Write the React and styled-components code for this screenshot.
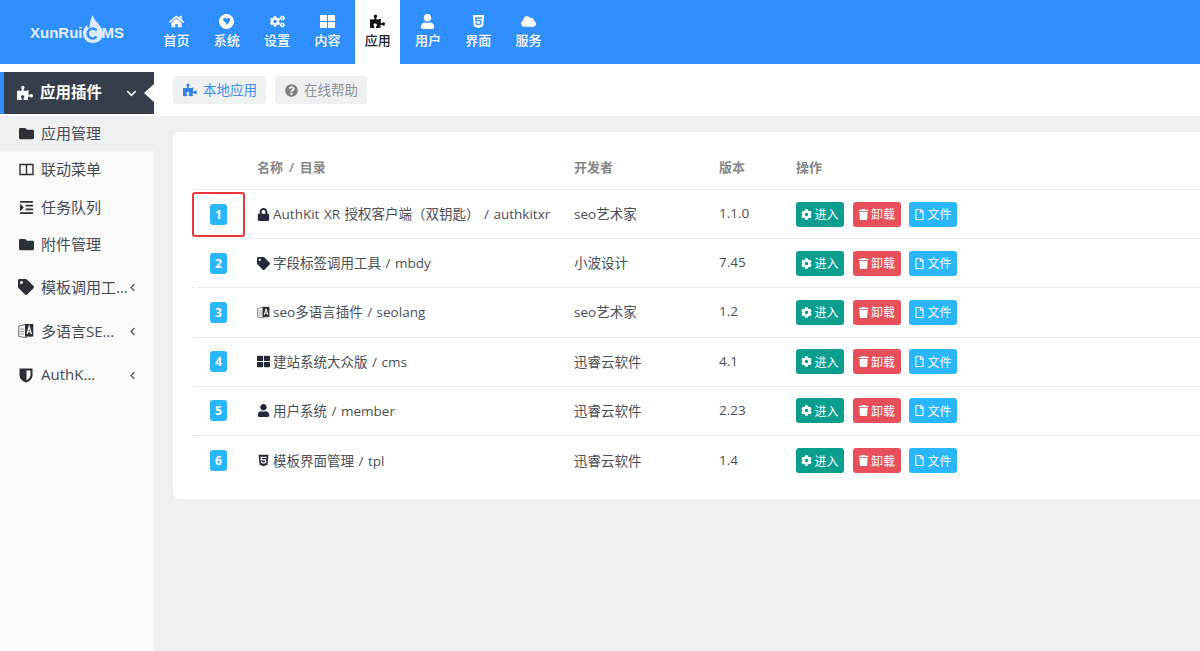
import styled, { createGlobalStyle } from 'styled-components';
import {
  FaHome, FaCogs, FaThLarge, FaPuzzlePiece, FaUser, FaHtml5, FaCloud,
  FaFolder, FaIndent, FaTag, FaLock, FaTrash,
  FaRegFile, FaCog, FaQuestionCircle, FaChevronDown, FaChevronLeft,
} from 'react-icons/fa';

const FONT = '"Open Sans", "Noto Sans CJK SC", sans-serif';

const GlobeIcon = () => (
  <svg viewBox="0 0 16 16">
    <circle cx="8" cy="8" r="8" fill="#ffffff" />
    <path d="M4.500 5c1.500-1.500 3-1 3.500 0 1-1 3.500-1 4 1 .3 2-2 3-3 5-.5 1-1.500 0-1.500-1C7.500 8.500 3.500 8 4.500 5z" fill="#2f8ffc" />
  </svg>
);

const ColumnsIcon = () => (
  <svg viewBox="0 0 15 15">
    <path d="M1 2.500h13v10H1zM7.500 2.500v10" fill="none" stroke="currentColor" strokeWidth="1.400" />
  </svg>
);

const BookIcon = () => (
  <svg viewBox="0 0 16 16">
    <path d="M.7 3l6.800-1.500v13L.7 13.500z" fill="#f4f4f4" stroke="#6d7078" strokeWidth="1" />
    <path d="M2 6h4M2 8.500h4M2 11h4" stroke="#9a9da3" strokeWidth="1" />
    <path d="M7 1h8.300v12.500H7z" fill="#2a2f38" />
    <path d="M9 11l2.200-7.500L13.400 11M9.800 8.800h2.800" fill="none" stroke="#ffffff" strokeWidth="1.200" />
    <path d="M7.500 14.500l3-1h3" fill="none" stroke="#6d7078" strokeWidth="1" />
  </svg>
);

const ShieldIcon = () => (
  <svg viewBox="0 0 14 16">
    <path d="M.5 1.500h13V8c0 3.500-3 6.500-6.500 7.500C3.500 14.500.5 11.500.5 8z" fill="#2a2f38" />
    <path d="M7.500 3.500h4V8c0 2.200-1.800 4.200-4 5.200z" fill="#fafafa" />
  </svg>
);

const GlobalStyle = createGlobalStyle`
  html, body {
    margin: 0;
    height: 100%;
    overflow: hidden;
    font-family: ${FONT};
    background: #eef0f2;
  }
  * { box-sizing: border-box; }
`;

const navItems = [
  { label: '首页', icon: FaHome },
  { label: '系统', icon: GlobeIcon },
  { label: '设置', icon: FaCogs },
  { label: '内容', icon: FaThLarge },
  { label: '应用', icon: FaPuzzlePiece, active: true },
  { label: '用户', icon: FaUser },
  { label: '界面', icon: FaHtml5 },
  { label: '服务', icon: FaCloud },
];

const menuItems = [
  { label: '应用管理', icon: FaFolder, active: true },
  { label: '联动菜单', icon: ColumnsIcon },
  { label: '任务队列', icon: FaIndent },
  { label: '附件管理', icon: FaFolder },
];

const groupItems = [
  { label: '模板调用工…', icon: FaTag },
  { label: '多语言SE…', icon: BookIcon },
  { label: 'AuthK…', icon: ShieldIcon },
];

const plugins = [
  { name: 'AuthKit XR 授权客户端（双钥匙） / authkitxr', icon: FaLock, dev: 'seo艺术家', ver: '1.1.0', marked: true },
  { name: '字段标签调用工具 / mbdy', icon: FaTag, dev: '小波设计', ver: '7.45' },
  { name: 'seo多语言插件 / seolang', icon: BookIcon, dev: 'seo艺术家', ver: '1.2' },
  { name: '建站系统大众版 / cms', icon: FaThLarge, dev: '迅睿云软件', ver: '4.1' },
  { name: '用户系统 / member', icon: FaUser, dev: '迅睿云软件', ver: '2.23' },
  { name: '模板界面管理 / tpl', icon: FaHtml5, dev: '迅睿云软件', ver: '1.4' },
];

const Page = styled.div`
  height: 100vh;
  display: flex;
  flex-direction: column;
  overflow: hidden;
`;

const Header = styled.header`
  height: 64px;
  flex: none;
  display: flex;
  background: #2f8ffc;
`;

const Logo = styled.div`
  width: 154px;
  padding-left: 30px;
  display: flex;
  align-items: center;
  color: #e2effe;
  font-size: 15px;
  font-weight: 700;
  font-family: "Liberation Sans", sans-serif;
  line-height: 1;
`;

const LogoMark = styled.svg`
  width: 20px;
  height: 28px;
  margin: -6px -1px 0 0;
  flex: none;
`;

const Nav = styled.nav`
  display: flex;
  gap: 5.3px;
`;

const NavItem = styled.a`
  width: 45px;
  display: flex;
  flex-direction: column;
  align-items: center;
  padding-top: 14px;
  font-size: 13px;
  line-height: 18px;
  font-weight: 500;
  color: ${(p) => (p.$active ? '#1c2330' : '#ffffff')};
  background: ${(p) => (p.$active ? '#ffffff' : 'transparent')};
  svg {
    width: auto;
    height: 15px;
    margin-bottom: 2px;
    color: ${(p) => (p.$active ? '#111111' : '#ffffff')};
  }
`;

const Body = styled.div`
  flex: 1;
  display: flex;
  min-height: 0;
`;

const Sidebar = styled.aside`
  width: 154px;
  flex: none;
  background: #fafafa;
`;

const SideTop = styled.div`
  height: 52px;
  padding-top: 8px;
  background: #ffffff;
`;

const SideTitle = styled.div`
  position: relative;
  height: 42px;
  display: flex;
  align-items: center;
  padding: 0 17px 0 13px;
  background: #363e4b;
  border-left: 4px solid #2f8ffc;
  color: #ffffff;
  font-size: 15.500px;
  font-weight: 700;
  span {
    padding-bottom: 3px;
  }
  svg:first-child {
    width: 16px;
    height: 16px;
    margin-right: 7px;
  }
  svg:nth-child(3) {
    width: 11px;
    height: 11px;
    margin-left: auto;
    color: #e6e8ea;
  }
  &::after {
    content: '';
    position: absolute;
    right: 0;
    top: 12px;
    border-style: solid;
    border-width: 9px 10px 9px 0;
    border-color: transparent #ffffff transparent transparent;
  }
`;

const MenuRow = styled.a`
  height: ${(p) => (p.$group ? '44px' : '37.4px')};
  display: flex;
  align-items: center;
  padding: 0 0 0 ${(p) => (p.$group ? '18px' : '19px')};
  background: ${(p) => (p.$active ? '#eef0f2' : 'transparent')};
  color: #444b57;
  font-size: 15px;
  white-space: nowrap;
  svg {
    width: ${(p) => (p.$group ? '16px' : '15px')};
    height: ${(p) => (p.$group ? '16px' : '15px')};
    color: #2a2f38;
    flex: none;
  }
`;

const MenuActive = styled(MenuRow)`
  height: 35px;
`;

const MenuLabel = styled.span`
  margin-left: 7px;
  padding-bottom: 2px;
`;

const GroupLabel = styled(MenuLabel)`
  width: 87px;
`;

const Caret = styled(FaChevronLeft)`
  && {
    width: 9px;
    height: 9px;
    color: #555b66;
  }
`;

const GroupSpacer = styled.div`
  height: 2px;
`;

const Main = styled.main`
  flex: 1;
  min-width: 0;
`;

const Tabs = styled.div`
  height: 52px;
  display: flex;
  align-items: flex-start;
  gap: 9px;
  padding: 12px 0 0 19px;
  background: #ffffff;
`;

const Tab = styled.a`
  height: 28px;
  display: flex;
  align-items: center;
  gap: 6px;
  padding: 0 9px 2px 10px;
  border-radius: 4px;
  background: #eef0f2;
  font-size: 13.500px;
  color: ${(p) => (p.$active ? '#3f8ef0' : '#8e9297')};
  svg {
    width: ${(p) => (p.$active ? '14px' : '13px')};
    height: ${(p) => (p.$active ? '14px' : '13px')};
    margin-top: 2px;
    color: ${(p) => (p.$active ? '#2f7fe6' : '#7d7f83')};
  }
`;

const Content = styled.div`
  padding: 16px 0 0 19px;
`;

const Card = styled.section`
  width: 1060px;
  height: 367px;
  padding: 16px 19px 0;
  background: #ffffff;
  border-radius: 6px;
`;

const Row = styled.div`
  position: relative;
  display: grid;
  grid-template-columns: 65px 317px 145px 77px 1fr;
  align-items: center;
  height: ${(p) => (p.$head ? '42px' : '49.2px')};
  border-bottom: ${(p) => (p.$last ? '0' : '1px dotted #dcdedf')};
  font-size: 13.500px;
  color: #4a4f5a;
`;

const HeadCell = styled.div`
  padding-bottom: 4px;
  font-size: 13px;
  font-weight: 600;
  word-spacing: 2.500px;
  color: #85878a;
`;

const NumCell = styled.div`
  display: flex;
  padding-left: 18px;
`;

const Badge = styled.span`
  width: 17px;
  height: 21px;
  display: flex;
  align-items: center;
  justify-content: center;
  border-radius: 3px;
  background: #29b6fb;
  color: #ffffff;
  font-size: 12px;
  font-weight: 700;
`;

const Marker = styled.span`
  position: absolute;
  left: 0;
  top: 2px;
  width: 53px;
  height: 45px;
  border: 2px solid #e8383d;
  border-radius: 3px;
`;

const TextCell = styled.div`
  padding-bottom: 2px;
`;

const NameCell = styled(TextCell)`
  display: flex;
  align-items: center;
  gap: 3px;
  word-spacing: 1px;
  white-space: nowrap;
  svg {
    width: auto;
    height: 13px;
    margin-top: 2px;
    flex: none;
    color: #232a3a;
  }
`;

const Actions = styled.div`
  display: flex;
  gap: 8.500px;
`;

const ActionButton = styled.a`
  width: 48px;
  height: 25px;
  display: flex;
  align-items: center;
  justify-content: center;
  gap: 2px;
  border-radius: 3px;
  background: ${(p) => p.$color};
  color: #ffffff;
  font-size: 12px;
  svg {
    width: auto;
    height: 11px;
  }
`;

export default function App() {
  return (
    <Page>
      <GlobalStyle />
      <Header>
        <Logo>
          XunRui
          <LogoMark viewBox="0 0 20 28">
            <path
              d="M10 0c.5 4 3 5.500 5.500 9 2.500 3 4.500 6 4.500 9.500C20 24 15.500 28 10 28S0 24 0 18.500c0-4 2-6.500 4-8.500 0 2 1 3 2.500 3C7 9 7 4 10 0z"
              fill="#dcebfe"
            />
            <path d="M13.500 15.300a5 5 0 1 0 0 6.400" fill="none" stroke="#2f8ffc" strokeWidth="2.600" />
          </LogoMark>
          MS
        </Logo>
        <Nav>
          {navItems.map((item) => (
            <NavItem key={item.label} $active={item.active}>
              <item.icon />
              {item.label}
            </NavItem>
          ))}
        </Nav>
      </Header>
      <Body>
        <Sidebar>
          <SideTop>
            <SideTitle>
              <FaPuzzlePiece />
              <span>应用插件</span>
              <FaChevronDown />
            </SideTitle>
          </SideTop>
          {menuItems.map((item) => {
            const Item = item.active ? MenuActive : MenuRow;
            return (
              <Item key={item.label} $active={item.active}>
                <item.icon />
                <MenuLabel>{item.label}</MenuLabel>
              </Item>
            );
          })}
          <GroupSpacer />
          {groupItems.map((item) => (
            <MenuRow key={item.label} $group>
              <item.icon />
              <GroupLabel>{item.label}</GroupLabel>
              <Caret />
            </MenuRow>
          ))}
        </Sidebar>
        <Main>
          <Tabs>
            <Tab $active>
              <FaPuzzlePiece />
              本地应用
            </Tab>
            <Tab>
              <FaQuestionCircle />
              在线帮助
            </Tab>
          </Tabs>
          <Content>
            <Card>
              <Row $head>
                <span />
                <HeadCell>名称 / 目录</HeadCell>
                <HeadCell>开发者</HeadCell>
                <HeadCell>版本</HeadCell>
                <HeadCell>操作</HeadCell>
              </Row>
              {plugins.map((p, i) => (
                <Row key={p.name} $last={i === plugins.length - 1}>
                  {p.marked && <Marker />}
                  <NumCell>
                    <Badge>{i + 1}</Badge>
                  </NumCell>
                  <NameCell>
                    <p.icon />
                    {p.name}
                  </NameCell>
                  <TextCell>{p.dev}</TextCell>
                  <TextCell>{p.ver}</TextCell>
                  <Actions>
                    <ActionButton $color="#0a9e8f">
                      <FaCog />
                      进入
                    </ActionButton>
                    <ActionButton $color="#e7505a">
                      <FaTrash />
                      卸载
                    </ActionButton>
                    <ActionButton $color="#29b6fb">
                      <FaRegFile />
                      文件
                    </ActionButton>
                  </Actions>
                </Row>
              ))}
            </Card>
          </Content>
        </Main>
      </Body>
    </Page>
  );
}
